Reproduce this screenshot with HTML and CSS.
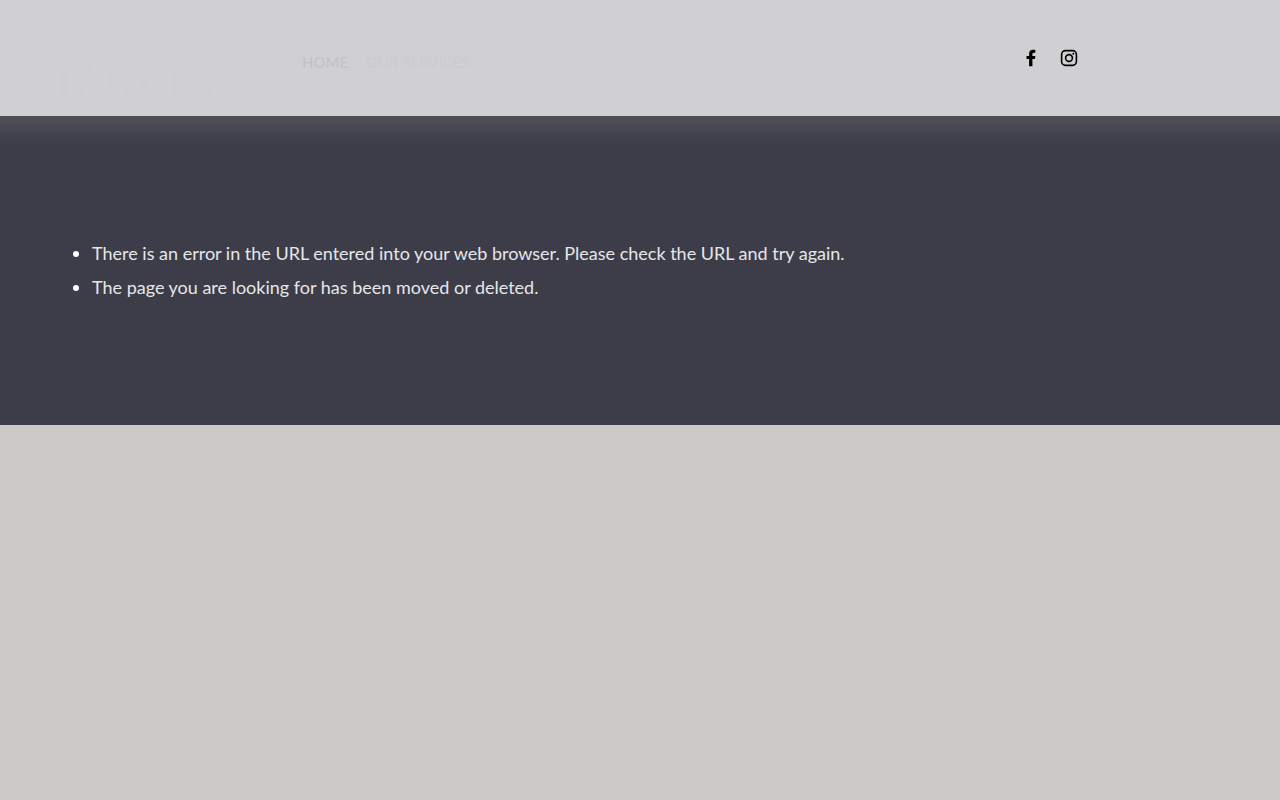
FILE: index.html
```html
<!DOCTYPE html>
<html lang="en">
<head>
    <meta charset="UTF-8">
    <meta name="viewport" content="width=device-width, initial-scale=1.0">
    <title>Page Not Found</title>
    <link rel="stylesheet" href="styles.css">
</head>
<body>
    <header class="header">
        <a class="logo" href="/" aria-label="Home">
            <svg width="160" height="42" viewBox="0 0 160 42" fill="currentColor">
                <rect x="0" y="2" width="8" height="38"/>
                <rect x="12" y="16" width="4" height="8"/>
                <rect x="17" y="24" width="7" height="9"/>
                <rect x="28" y="1" width="4" height="8"/>
                <rect x="41" y="32" width="4" height="8"/>
                <rect x="48" y="9" width="4" height="16"/>
                <rect x="57" y="2" width="7" height="14"/>
                <rect x="64" y="24" width="7" height="16"/>
                <rect x="73" y="1" width="6" height="8"/>
                <rect x="80" y="17" width="8" height="8"/>
                <rect x="97" y="16" width="4" height="9"/>
                <rect x="105" y="1" width="4" height="8"/>
                <rect x="112" y="9" width="4" height="31"/>
                <rect x="137" y="1" width="11" height="5"/>
                <rect x="147" y="24" width="5" height="9"/>
            </svg>
        </a>
        <nav class="nav">
            <a class="active" href="/">HOME</a>
            <a href="/our-services">OUR SERVICES</a>
        </nav>
        <div class="social">
            <a href="#" aria-label="Facebook">
                <svg width="18" height="18" viewBox="0 0 18 18" fill="currentColor">
                    <path d="M7.1 17.2V10H4.5V6.9h2.6V4.7C7.1 2.2 8.6.8 11 .8c1 0 2.1.2 2.3.2v2.8h-1.5c-1.1 0-1.4.6-1.4 1.3v1.8h2.9l-.4 3.1h-2.5v7.2z"/>
                </svg>
            </a>
            <a href="#" aria-label="Instagram">
                <svg width="18" height="18" viewBox="0 0 18 18" fill="none" stroke="currentColor" stroke-width="1.6">
                    <rect x="1.6" y="1.6" width="14.8" height="14.8" rx="3.8"/>
                    <circle cx="9" cy="9" r="3.4"/>
                    <circle cx="13.3" cy="4.7" r="1" fill="currentColor" stroke="none"/>
                </svg>
            </a>
        </div>
    </header>
    <main class="message">
        <ul>
            <li>There is an error in the URL entered into your web browser. Please check the URL and try again.</li>
            <li>The page you are looking for has been moved or deleted.</li>
        </ul>
    </main>
</body>
</html>
```
FILE: styles.css
```css
body {
    margin: 0;
    background-color: #cdc9c6;
    font-family: Lato, sans-serif;
}
.header {
    display: flex;
    align-items: flex-start;
    box-sizing: border-box;
    min-height: 116px;
    padding: 49px 202px 0 60px;
    background-color: #d0d0d2;
}
.logo {
    margin-top: 14px;
    color: #cfcfd1;
}
.logo svg {
    display: block;
}
.nav {
    display: flex;
    gap: 18px;
    margin-left: 82px;
    font-size: 15px;
    line-height: 26px;
}
.nav a {
    color: #cccccd;
    text-decoration: none;
}
.nav .active {
    color: #c2c2c4;
}
.social {
    display: flex;
    gap: 20px;
    margin-left: auto;
}
.social a {
    color: #000;
}
.social svg {
    display: block;
}
.message {
    padding: 120px 60px 121px;
    background: linear-gradient(#505053, #4a4953 10px, #3e3f4a 24px, #3c3d49 32px);
    color: #fff;
}
.message ul {
    margin: 0;
    padding-left: 32px;
    font-size: 18px;
    line-height: 34px;
}
.message li {
    color: #e6e6ea;
}
.message li::marker {
    color: #fff;
}
```
